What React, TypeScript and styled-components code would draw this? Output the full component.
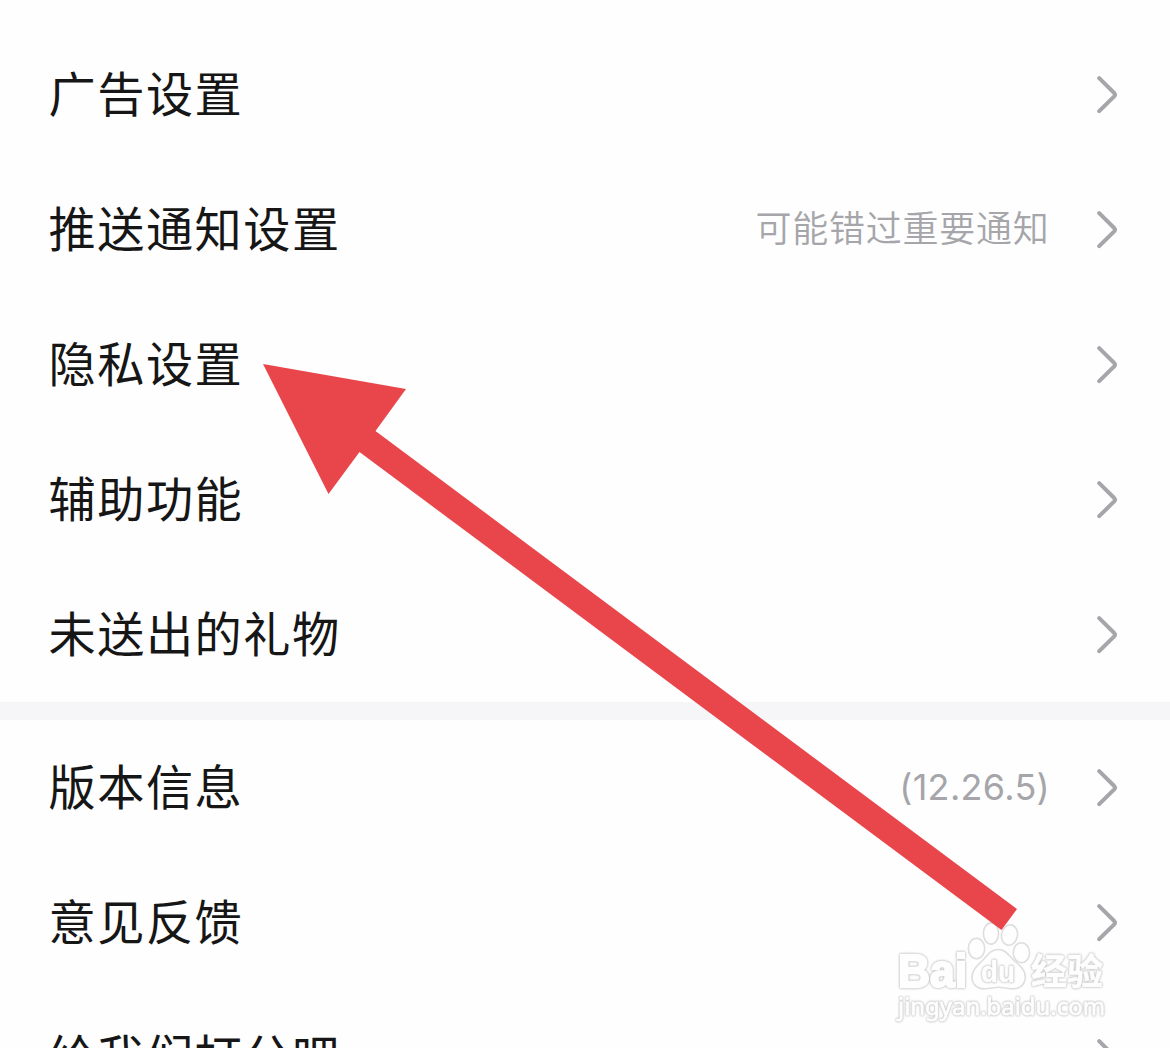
import React from "react";
import styled, { createGlobalStyle } from "styled-components";

const GlobalStyle = createGlobalStyle`
  * { box-sizing: border-box; }
  body { margin: 0; background: #fefefe; }
`;

const Screen = styled.main`
  position: relative;
  width: 1170px;
  height: 1048px;
  overflow: hidden;
  display: flex;
  flex-direction: column;
  padding-top: 27px;
  background: #fefefe;
  font-family: "Noto Sans CJK SC", sans-serif;
`;

const Group = styled.ul`
  flex: none;
  list-style: none;
  margin: 0;
  padding: 0;
`;

const Divider = styled.div`
  flex: none;
  height: 18px;
  background: #f6f6f9;
`;

const Row = styled.li`
  display: flex;
  align-items: center;
  height: 135px;
  padding: 0 52px 0 48.5px;
`;

const Label = styled.span`
  flex: 1;
  padding-bottom: 6px;
  font-size: 47.2px;
  line-height: 70px;
  letter-spacing: 1.5px;
  color: #161616;
`;

const Value = styled.span<{ $latin?: boolean }>`
  margin-right: ${(p) => (p.$latin ? "46px" : "46.5px")};
  padding-bottom: ${(p) => (p.$latin ? "2px" : "8px")};
  font-family: ${(p) => (p.$latin ? 'Inter, sans-serif' : '"Noto Sans CJK SC", sans-serif')};
  font-size: 36px;
  font-weight: ${(p) => (p.$latin ? 400 : 350)};
  line-height: 52px;
  letter-spacing: ${(p) => (p.$latin ? "0.3px" : "0.75px")};
  color: #a5a5aa;
`;

const Chevron = styled.svg`
  flex: none;
  width: 22px;
  height: 40px;
  fill: none;
  stroke: #a5a5aa;
  stroke-width: 4;
  stroke-linecap: round;
  stroke-linejoin: round;
`;

const Pointer = styled.svg`
  position: absolute;
  left: 262px;
  top: 362px;
  fill: #e9464c;
`;

const Watermark = styled.svg`
  position: absolute;
  left: 890px;
  top: 915px;
  fill: #fefefe;
  stroke: #dedede;
  stroke-width: 1.6;
`;

const WatermarkText = styled.text<{ $weight: number }>`
  stroke: #fefefe;
  stroke-width: ${(p) => p.$weight}px;
  stroke-linejoin: miter;
  filter: drop-shadow(0 0 0.9px #b8b8b8) drop-shadow(0 0 0.5px #d8d8d8);
`;

type Item = { label: string; value?: string; latin?: boolean };

const general: Item[] = [
  { label: "广告设置" },
  { label: "推送通知设置", value: "可能错过重要通知" },
  { label: "隐私设置" },
  { label: "辅助功能" },
  { label: "未送出的礼物" },
];

const about: Item[] = [
  { label: "版本信息", value: "(12.26.5)", latin: true },
  { label: "意见反馈" },
  { label: "给我们打分吧" },
];

const SettingRow = ({ label, value, latin }: Item) => (
  <Row>
    <Label>{label}</Label>
    {value && <Value $latin={latin}>{value}</Value>}
    <Chevron viewBox="0 0 22 40">
      <path d="M3.2 3.2 L18.2 18 Q19.8 19.7 18.2 21.4 L3.2 36.2" />
    </Chevron>
  </Row>
);

export default function App() {
  return (
    <>
      <GlobalStyle />
      <Screen>
        <Group>{general.map((i) => <SettingRow key={i.label} {...i} />)}</Group>
        <Divider />
        <Group>{about.map((i) => <SettingRow key={i.label} {...i} />)}</Group>
        <Watermark width="226" height="112" viewBox="0 0 226 112">
          <ellipse cx="86.5" cy="33.5" rx="8.2" ry="10.3" />
          <ellipse cx="101" cy="18.5" rx="7.6" ry="10.6" />
          <ellipse cx="119.5" cy="20" rx="8" ry="10.3" transform="rotate(10 119.5 20)" />
          <ellipse cx="131.4" cy="37.7" rx="8.2" ry="10" />
          <path d="M108.3 34.5 C116 34.5 119 41 124.5 46 C130 50.5 135.3 55 135.3 62 C135.3 70 129 74.2 122 73.8 C116 73.5 113 72.3 108.5 72.3 C104 72.3 101 73.5 95 73.8 C88 74.2 82 70 82 62 C82 55 87 51 92 46 C97.5 41 100 34.5 108.3 34.5Z" />
          <WatermarkText $weight={2.4} x="8" y="72" fontFamily="Liberation Sans" fontWeight="700" fontSize="47" textLength="69" lengthAdjust="spacingAndGlyphs">Bai</WatermarkText>
          <WatermarkText $weight={0.4} x="91" y="67" fontFamily="Liberation Sans" fontWeight="700" fontSize="29" textLength="34" lengthAdjust="spacingAndGlyphs">du</WatermarkText>
          <WatermarkText $weight={0.6} x="141" y="70" fontFamily="Noto Sans CJK SC" fontWeight="700" fontSize="36">经验</WatermarkText>
          <WatermarkText $weight={0.8} x="8" y="100" fontFamily="Noto Sans" fontSize="24" textLength="207" lengthAdjust="spacingAndGlyphs">jingyan.baidu.com</WatermarkText>
        </Watermark>
        <Pointer width="760" height="572" viewBox="262 362 760 572">
          <polygon points="263,364 406,389 375.5,431 1017,909 1001.5,930 359.5,452 328.5,494" />
        </Pointer>
      </Screen>
    </>
  );
}
